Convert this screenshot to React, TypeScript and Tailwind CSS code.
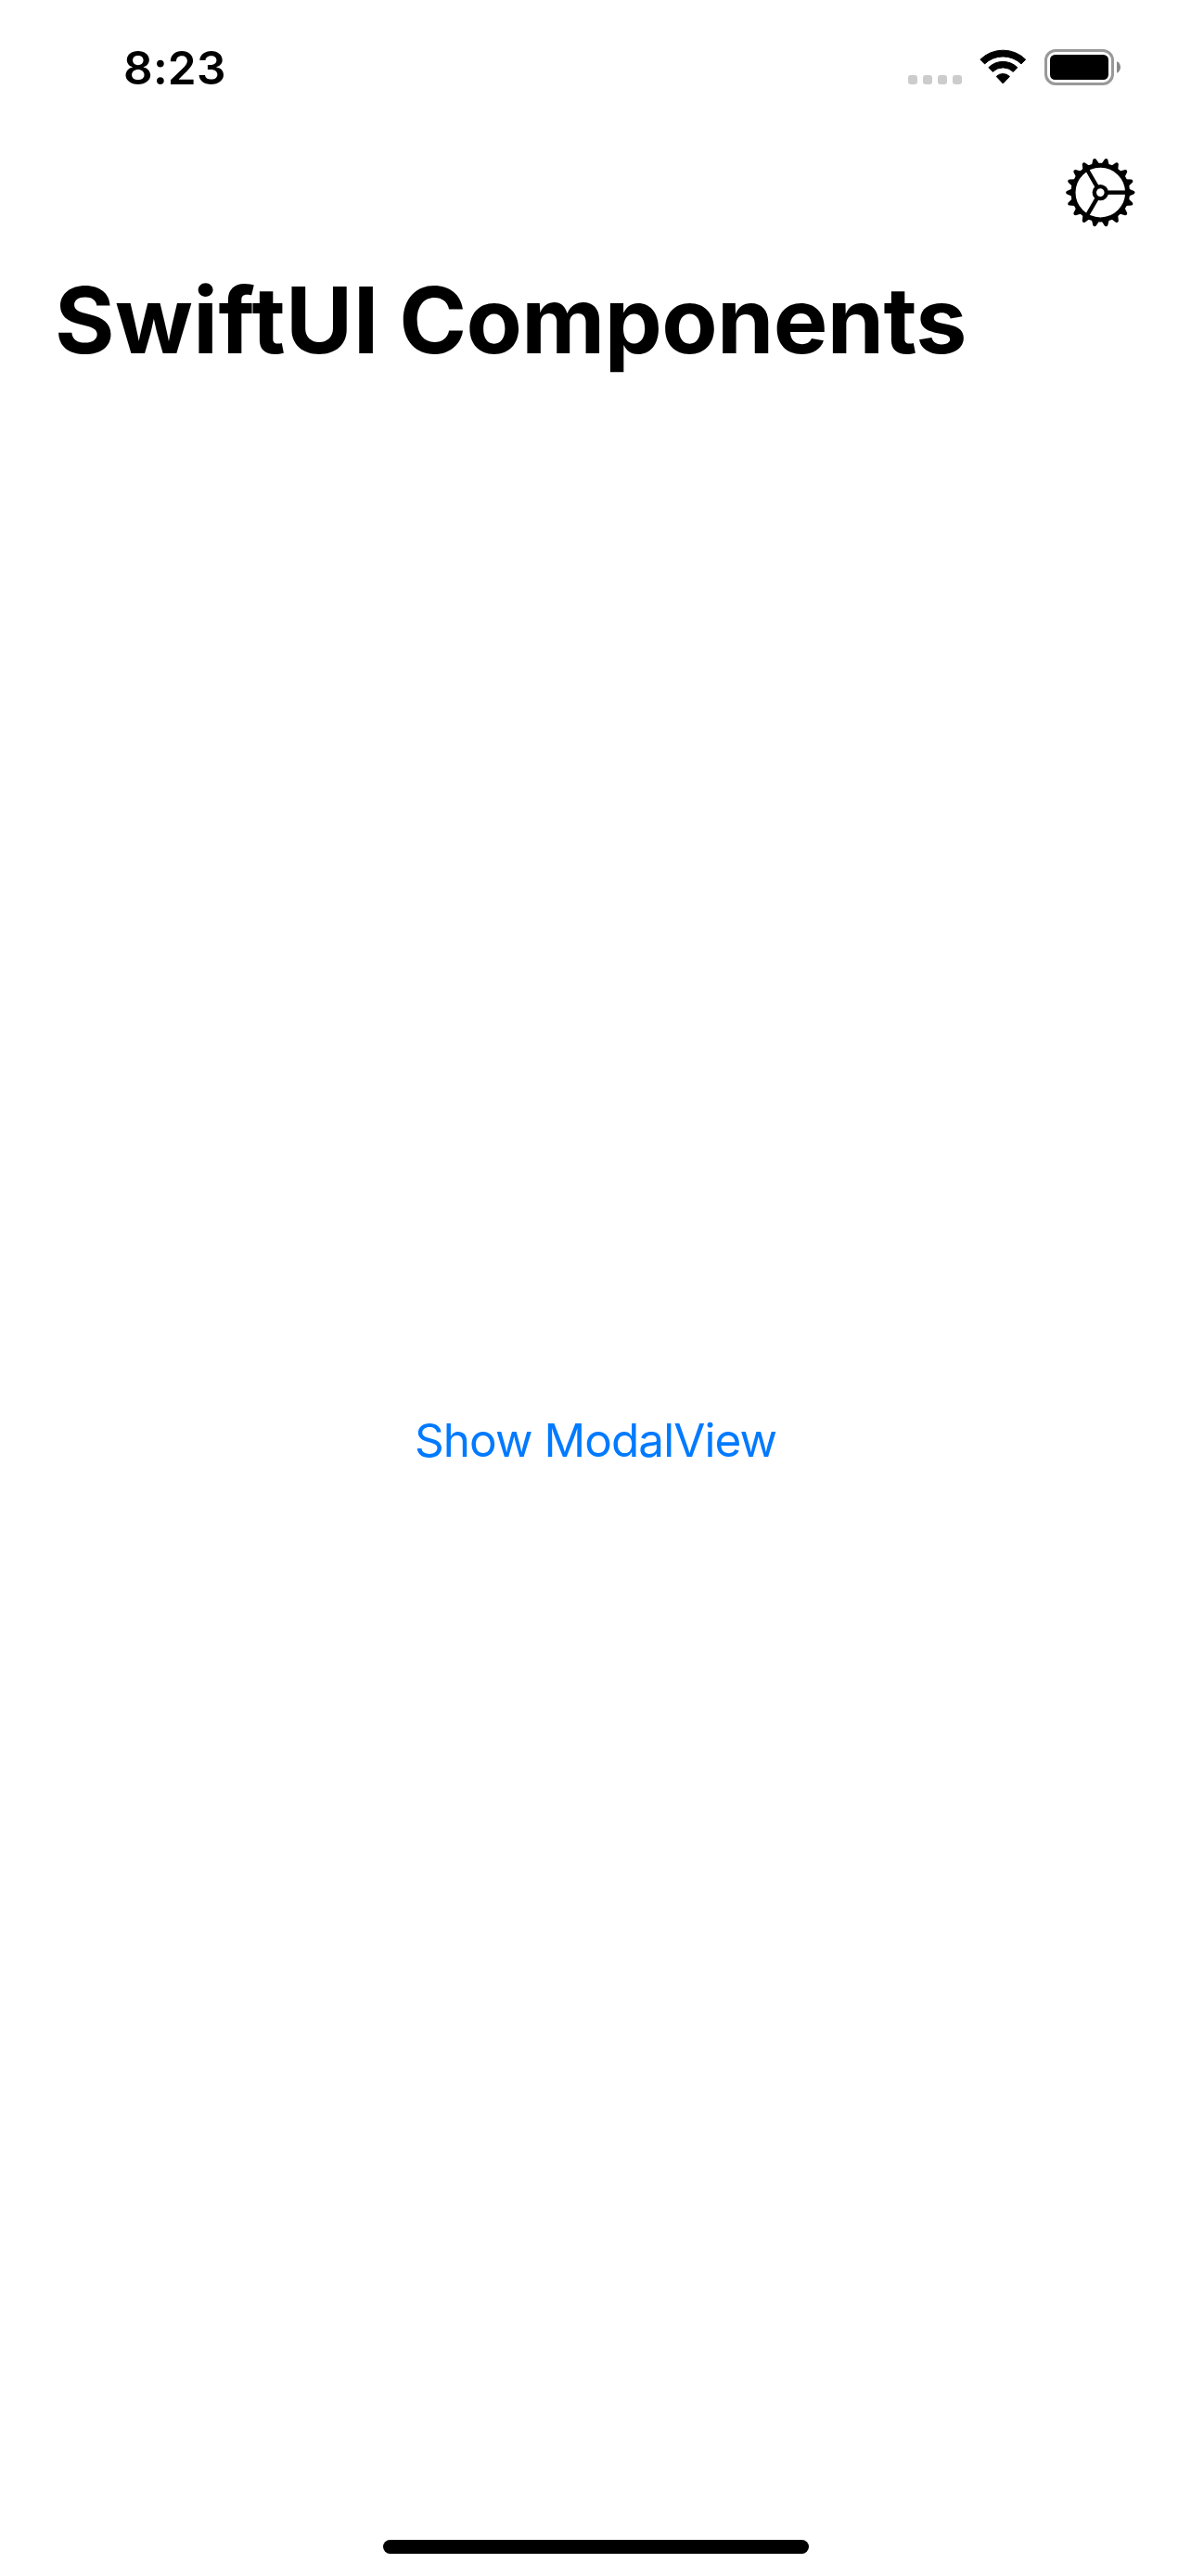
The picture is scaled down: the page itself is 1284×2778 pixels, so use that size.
const TEETH = Array.from({ length: 18 }, (_, i) => i * 20);
const SPOKES = [0, 120, 240];

function Wifi() {
  return (
    <svg className="ml-[19px] h-[38px] w-[51px]" viewBox="0 0 51 38" stroke="#000" strokeWidth="1" strokeLinejoin="round">
      <path d="M.9 11.2A34.7 34.7 0 0 1 49.7 11.2L45 15.9A28.4 28.4 0 0 0 5.6 15.9Z" />
      <path d="M9.8 19.8A22 22 0 0 1 40.8 19.8L36.3 24.4A15.7 15.7 0 0 0 14.3 24.4Z" />
      <path d="M18.2 29.4A10.3 10.3 0 0 1 32.4 29.4L25.3 37Z" />
    </svg>
  );
}

function Battery() {
  return (
    <svg className="ml-[19px] h-[39px] w-[83px]" viewBox="0 0 83 39">
      <rect x="1.5" y="1.5" width="72" height="36" rx="10.5" fill="none" stroke="#999" strokeWidth="3" />
      <rect x="6" y="6" width="63" height="27" rx="5.5" />
      <path d="M78 13.2C80.6 14.2 82 16.6 82 19.5S80.6 24.8 78 25.8Z" fill="#888" />
    </svg>
  );
}

function Gear() {
  return (
    <svg className="h-[76px] w-[76px]" viewBox="-38.3 -37.6 76 76">
      <circle r="29.3" fill="none" stroke="#000" strokeWidth="5" />
      {TEETH.map((a) => (
        <path key={a} transform={`rotate(${a})`} d="M30.5 -4.2L36.2 -1.7Q38.2 0 36.2 1.7L30.5 4.2Z" />
      ))}
      <circle r="6.5" fill="none" stroke="#000" strokeWidth="4.4" />
      {SPOKES.map((a) => (
        <path key={a} transform={`rotate(${a})`} d="M7.5 0H29" stroke="#000" strokeWidth="4.4" />
      ))}
    </svg>
  );
}

export default function App() {
  return (
    <div className="flex h-[2778px] w-[1284px] flex-col bg-white font-['Inter',sans-serif] text-black">
      <header className="flex h-[132px] shrink-0 items-start justify-between pr-[75px] pl-[133px]">
        <time className="mt-[43px] text-[49.5px] leading-[60px] font-semibold tracking-[0.2px]">8:23</time>
        <div className="flex pt-[53px]">
          <div className="mt-7 flex gap-1.5">
            {[0, 1, 2, 3].map((i) => (
              <span key={i} className="size-2.5 rounded-[3px] bg-[#ccc]" />
            ))}
          </div>
          <Wifi />
          <Battery />
        </div>
      </header>
      <nav className="flex h-[153px] shrink-0 items-start justify-end pt-[38px] pr-[60px]">
        <button aria-label="Settings">
          <Gear />
        </button>
      </nav>
      <h1 className="pl-[59px] text-[98.6px] leading-[120px] font-bold tracking-[-2px] whitespace-nowrap">
        <span className="tracking-[0.5px]">SwiftUI</span> <span className="tracking-[-0.65px]">Components</span>
      </h1>
      <main className="flex grow flex-col items-center pt-[1118px]">
        <button className="text-[49.5px] leading-[60px] tracking-[-0.95px] whitespace-nowrap text-[#007aff]">Show ModalView</button>
      </main>
      <footer className="flex h-[39px] shrink-0 justify-center">
        <div className="h-[15px] w-[459px] rounded-full bg-black" />
      </footer>
    </div>
  );
}
